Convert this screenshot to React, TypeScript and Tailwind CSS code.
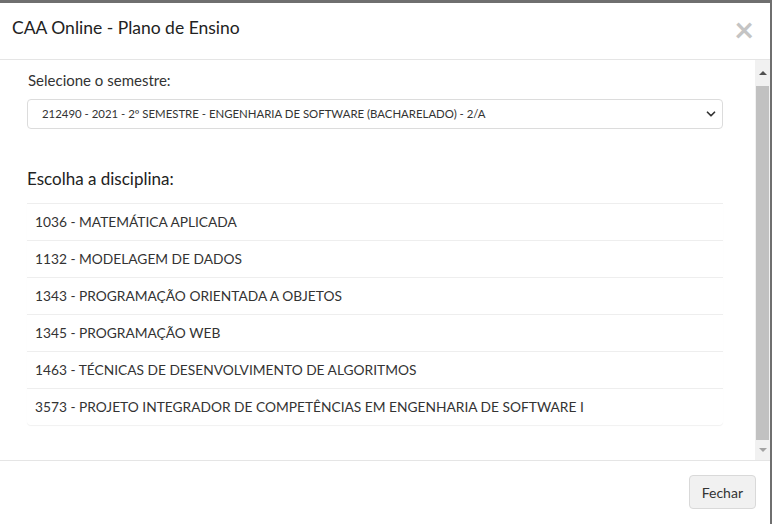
import { ChevronDown } from "lucide-react";

const disciplinas = [
  "1036 - MATEMÁTICA APLICADA",
  "1132 - MODELAGEM DE DADOS",
  "1343 - PROGRAMAÇÃO ORIENTADA A OBJETOS",
  "1345 - PROGRAMAÇÃO WEB",
  "1463 - TÉCNICAS DE DESENVOLVIMENTO DE ALGORITMOS",
  "3573 - PROJETO INTEGRADOR DE COMPETÊNCIAS EM ENGENHARIA DE SOFTWARE I",
];

const App = () => {
  return (
    <div className="h-[524px] w-[772px] overflow-hidden bg-[#6f6f6f] pr-[2px] pt-[3px] font-['Lato',sans-serif] text-[#333]">
      <div className="flex h-full flex-col bg-white">
        {/* header */}
        <div className="flex h-[57px] shrink-0 items-center justify-between border-b border-[#e5e5e5] pb-[5px] pl-3 pr-4">
          <h4 className="text-[17.5px] text-[#222]">CAA Online - Plano de Ensino</h4>
          <span className="text-[34px] font-bold leading-none text-[#c4c4c4]">×</span>
        </div>

        {/* body */}
        <div className="flex h-[400px] shrink-0">
          <div className="flex-1 pl-[27px] pr-[32px] pt-[9px]">
            <label className="block pl-px text-[15px] text-[#333]">Selecione o semestre:</label>
            <div className="mt-[7px] flex h-[30px] items-center justify-between rounded border border-[#dcdcdc] pl-[14px] pr-[4px]">
              <span className="text-[11.4px] text-[#333]">
                212490 - 2021 - 2º SEMESTRE - ENGENHARIA DE SOFTWARE (BACHARELADO) - 2/A
              </span>
              <ChevronDown className="size-[14px] text-[#333]" strokeWidth={3} />
            </div>

            <h5 className="mt-[37px] text-[17px] text-[#222]">Escolha a disciplina:</h5>
            <ul className="mt-[12px] rounded-b shadow-[0_1px_1px_rgba(0,0,0,0.06)]">
              {disciplinas.map((d) => (
                <li
                  key={d}
                  className="flex h-[37px] items-center border-t border-[#eeeeee] pl-2 text-[13.75px] text-[#333]"
                >
                  {d}
                </li>
              ))}
            </ul>
          </div>

          {/* scrollbar */}
          <div className="flex w-[15px] flex-col items-center bg-[#f1f1f1]">
            <div className="flex h-[26px] items-center justify-center">
              <div className="h-0 w-0 border-x-[4px] border-b-[4px] border-x-transparent border-b-[#505050]" />
            </div>
            <div className="w-[13px] flex-1 bg-[#c1c1c1]" />
            <div className="flex h-[20px] items-center justify-center">
              <div className="h-0 w-0 border-x-[4px] border-t-[4px] border-x-transparent border-t-[#a3a3a3]" />
            </div>
          </div>
        </div>

        {/* footer */}
        <div className="flex flex-1 items-start justify-end border-t border-[#e5e5e5] pr-[14px] pt-[14px]">
          <button className="h-[34px] rounded border border-[#d9d9d9] bg-[#f1f1f1] px-3 text-[14px] text-[#333]">
            Fechar
          </button>
        </div>
      </div>
    </div>
  );
};

export default App;
